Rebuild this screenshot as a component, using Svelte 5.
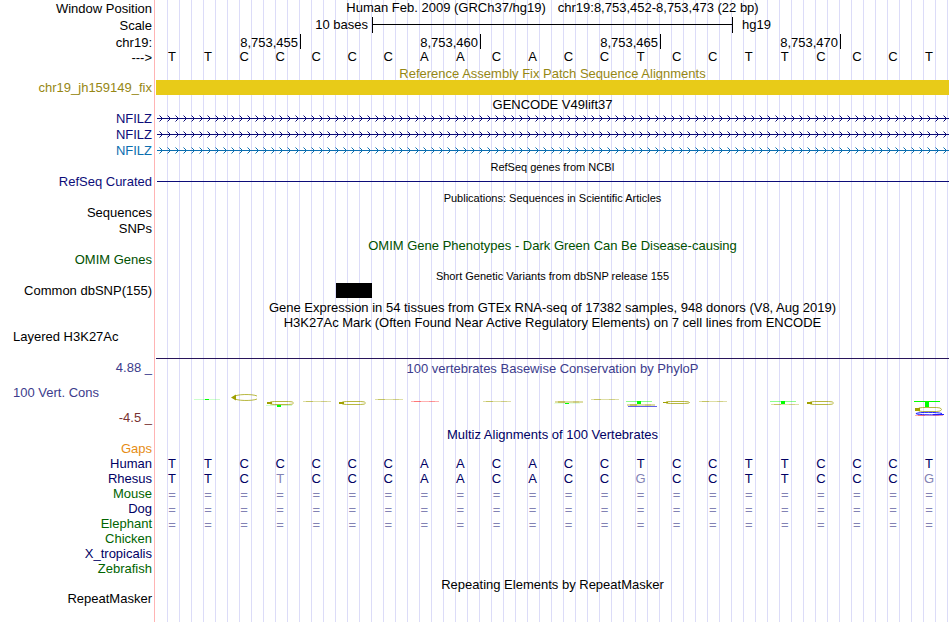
<script lang="ts">
  const sequence = 'TTCCCCCAACACCTCCTTCCCT';
  const ticks = ['8,753,455', '8,753,460', '8,753,465', '8,753,470'];

  const transcripts = [
    { name: 'NFILZ', tone: 'navy' },
    { name: 'NFILZ', tone: 'navy' },
    { name: 'NFILZ', tone: 'azure' },
  ];

  const gapRow = '='.repeat(22);
  const species = [
    { name: 'Gaps', tone: 'orange', bases: '' },
    { name: 'Human', tone: 'midnight', bases: sequence },
    { name: 'Rhesus', tone: 'midnight', bases: 'TTCTCCCAACACCGCCTTCCCG' },
    { name: 'Mouse', tone: 'forest', bases: gapRow },
    { name: 'Dog', tone: 'midnight', bases: gapRow },
    { name: 'Elephant', tone: 'forest', bases: gapRow },
    { name: 'Chicken', tone: 'forest', bases: '' },
    { name: 'X_tropicalis', tone: 'midnight', bases: '' },
    { name: 'Zebrafish', tone: 'forest', bases: '' },
  ];

  // Conservation marks, in plot units: x and y from the top left of the track.
  const rings = [
    { x: 111, y: 26, h: 4 },
    { x: 183, y: 26, h: 4 },
    { x: 507, y: 26, h: 3 },
    { x: 651, y: 26, h: 4 },
    { x: 759, y: 32, h: 5 },
  ];
  const dashes = [
    { x: 147, y: 26, h: 1, tone: 'olive' },
    { x: 219, y: 24, h: 1, tone: 'olive' },
    { x: 255, y: 26, h: 1, tone: 'red' },
    { x: 327, y: 26, h: 1, tone: 'olive' },
    { x: 399, y: 26, h: 2, tone: 'olive' },
    { x: 435, y: 24, h: 1, tone: 'olive' },
    { x: 471, y: 29, h: 2, tone: 'olive' },
    { x: 543, y: 26, h: 1, tone: 'olive' },
    { x: 615, y: 29, h: 1, tone: 'olive' },
    { x: 759, y: 40, h: 1, tone: 'red' },
  ];
  const stems = [
    { x: 38, y: 24, h: 1, bar: 0.2 },
    { x: 110, y: 30, h: 2, bar: 0.2 },
    { x: 398, y: 28, h: 1, bar: 0.1 },
    { x: 470, y: 26, h: 3, bar: 0.45 },
    { x: 614, y: 26, h: 3, bar: 0.45 },
    { x: 758, y: 26, h: 6, bar: 1 },
  ];
</script>

{#snippet title(text: string, tone = 'black', small = false)}
  <div class="row">
    <h2 class="title {tone}" class:small>{text}</h2>
  </div>
{/snippet}

{#snippet bases(letters: string, ref = '')}
  <div class="bases">
    {#each letters as letter, i}
      <span class:diff={ref && letter !== ref[i]}>{letter}</span>
    {/each}
  </div>
{/snippet}

<main class="browser">
  <div class="row header">
    <span class="label">Window Position</span>
    <div class="position">
      <span>Human Feb. 2009 (GRCh37/hg19)</span>
      <span>chr19:8,753,452-8,753,473 (22 bp)</span>
    </div>
  </div>
  <div class="row header">
    <span class="label">Scale</span>
    <div class="scale">
      <span class="scale-size">10 bases</span>
      <span class="scale-bar"></span>
      <span class="scale-db">hg19</span>
    </div>
  </div>
  <div class="row ruler-row">
    <span class="label">chr19:</span>
    <div class="ruler">
      {#each ticks as tick}
        <span>{tick}</span>
      {/each}
    </div>
  </div>
  <div class="row sequence">
    <span class="label">---&gt;</span>
    {@render bases(sequence)}
  </div>

  {@render title('Reference Assembly Fix Patch Sequence Alignments', 'gold')}
  <div class="row">
    <span class="label gold">chr19_jh159149_fix</span>
    <div class="patch"></div>
  </div>

  {@render title('GENCODE V49lift37')}
  {#each transcripts as t, i}
    <div class="row">
      <span class="label {t.tone}">{t.name}</span>
      <svg class="transcript {t.tone}" aria-hidden="true">
        <defs>
          <pattern id="arrow-{i}" width="8" height="16" patternUnits="userSpaceOnUse">
            <path d="M3.5 4.5L6.5 7.5L3.5 10.5" fill="none" stroke="currentColor" />
          </pattern>
        </defs>
        <rect x="1" y="7" width="100%" height="1" fill="currentColor" />
        <rect width="100%" height="16" fill="url(#arrow-{i})" />
      </svg>
    </div>
  {/each}

  {@render title('RefSeq genes from NCBI', 'black', true)}
  <div class="row">
    <span class="label navy">RefSeq Curated</span>
    <div class="refseq"></div>
  </div>

  {@render title('Publications: Sequences in Scientific Articles', 'black', true)}
  <div class="row"><span class="label">Sequences</span></div>
  <div class="row"><span class="label">SNPs</span></div>

  {@render title('OMIM Gene Phenotypes - Dark Green Can Be Disease-causing', 'green')}
  <div class="row"><span class="label green">OMIM Genes</span></div>

  {@render title('Short Genetic Variants from dbSNP release 155', 'black', true)}
  <div class="row">
    <span class="label">Common dbSNP(155)</span>
    <div class="variants"><span></span></div>
  </div>

  {@render title('Gene Expression in 54 tissues from GTEx RNA-seq of 17382 samples, 948 donors (V8, Aug 2019)')}
  {@render title('H3K27Ac Mark (Often Found Near Active Regulatory Elements) on 7 cell lines from ENCODE')}
  <div class="row histone">
    <span class="label left">Layered H3K27Ac</span>
    <div class="baseline"></div>
  </div>

  <div class="row">
    <div class="axis">
      <span class="indigo">4.88 _</span>
      <span class="indigo left">100 Vert. Cons</span>
      <span class="maroon">-4.5 _</span>
    </div>
    <div class="conservation">
      <h2 class="title indigo">100 vertebrates Basewise Conservation by PhyloP</h2>
      <svg viewBox="0 0 793 51" preserveAspectRatio="none" aria-hidden="true">
        <!-- tall open mark, heavier on its left side -->
        <path class="ring" d="M101 21C97 18.9 79 18.7 77 22.5C79 26.3 97 26.1 101 24" />
        <path class="olive" d="M75 22.5L80 19.5V25.5Z" />
        {#each rings as r}
          <rect class="ring" x={r.x + 2.5} y={r.y + 0.5} width="24" height={r.h - 1} rx="5" ry={(r.h - 1) / 2} />
          <rect class="olive" x={r.x} y={r.y + 1} width="5" height={r.h - 2} />
        {/each}
        {#each dashes as d}
          <rect class={d.tone} x={d.x} y={d.y} width="28" height={d.h} opacity="0.35" />
          <rect class={d.tone} x={d.x + 3} y={d.y} width="7" height={d.h} opacity="0.4" />
          <rect class={d.tone} x={d.x + 18} y={d.y} width="6" height={d.h} opacity="0.2" />
        {/each}
        {#each stems as s}
          <rect class="lime" x={s.x} y={s.y} width="26" height="1" opacity={s.bar} />
          <rect class="lime" x={s.x + 11} y={s.y} width="4" height={s.h} />
        {/each}
        <rect class="blue" x="472" y="31" width="29" height="1" opacity="0.7" />
        <path class="blue-line" d="M786 38.5C781 37 763 37 760 38.5C760 40 780 40 788 39.5H777" />
      </svg>
    </div>
  </div>

  {@render title('Multiz Alignments of 100 Vertebrates', 'midnight')}
  {#each species as s}
    <div class="row species">
      <span class="label {s.tone}">{s.name}</span>
      <div class="midnight" class:gapped={s.bases === gapRow}>
        {@render bases(s.bases, s.bases === gapRow ? '' : sequence)}
      </div>
    </div>
  {/each}

  {@render title('Repeating Elements by RepeatMasker')}
  <div class="row"><span class="label">RepeatMasker</span></div>
</main>

<style>
  :global(body) {
    margin: 0;
    background: #fff;
  }

  .browser {
    min-height: 100vh;
    box-sizing: border-box;
    font: 13px/16px "Liberation Sans", Arial, sans-serif;
    color: #000;
    white-space: nowrap;
    /* pink divider beside the labels, then a guideline every 12px */
    background:
      linear-gradient(#ffb4b4, #ffb4b4) 154px 0 / 1px 100% no-repeat,
      repeating-linear-gradient(to right, transparent 0 11px, #dcdcf8 11px 12px) 156px 0 / 100% 100% no-repeat;
  }

  .row {
    display: grid;
    grid-template-columns: 152px minmax(0, 1fr);
    column-gap: 4px;
    padding-right: 1px;
  }

  .label {
    text-align: right;
  }

  .left {
    text-align: left;
    padding-left: 13px;
  }

  .title {
    grid-column: 2;
    height: 15px;
    margin: 0;
    font-size: 13px;
    font-weight: normal;
    line-height: 17px;
    text-align: center;
  }

  .title.small {
    font-size: 11px;
  }

  .header {
    height: 17px;
    line-height: 15px;
  }

  .header .label {
    line-height: 17px;
  }

  .position {
    display: flex;
    justify-content: center;
    gap: 12px;
  }

  .scale {
    display: flex;
    margin-right: 1px;
  }

  .scale-size {
    box-sizing: border-box;
    width: calc(100% * 6 / 22);
    padding-right: 4px;
    text-align: right;
  }

  .scale-bar {
    box-sizing: border-box;
    width: calc(100% * 10 / 22 + 1px);
    height: 16px;
    border: solid #000;
    border-width: 0 1px;
    background: linear-gradient(#000, #000) 0 7px / 100% 1px no-repeat;
  }

  .scale-db {
    padding-left: 9px;
  }

  .ruler-row {
    height: 15px;
    line-height: 18px;
  }

  .ruler {
    display: grid;
    grid-template-columns: 4fr 5fr 5fr 5fr 3fr;
    margin-right: 1px;
  }

  .ruler span {
    height: 15px;
    margin-right: -1px;
    padding-right: 2px;
    border-right: 1px solid #000;
    text-align: right;
  }

  .sequence {
    height: 16px;
  }

  .sequence .label {
    line-height: 18px;
  }

  .bases {
    display: grid;
    grid-template-columns: repeat(22, 1fr);
    text-align: center;
  }

  .bases span {
    padding-right: 4px;
  }

  .patch {
    height: 15px;
    background: #e8cb18;
  }

  .transcript {
    display: block;
    width: 100%;
    height: 16px;
  }

  .refseq {
    height: 1px;
    margin: 7px 0 8px 1px;
    background: #0c0c78;
  }

  .variants {
    margin-right: 1px;
  }

  .variants span {
    display: block;
    height: 15px;
    width: calc(100% / 22);
    margin-left: calc(100% * 5 / 22);
    background: #000;
  }

  .histone {
    height: 30px;
    line-height: 15px;
  }

  .baseline {
    border-bottom: 1px solid #28145a;
  }

  .axis {
    display: flex;
    flex-direction: column;
    gap: 10px;
    padding: 1px 0;
    line-height: 15px;
    text-align: right;
  }

  .axis .left {
    text-align: left;
  }

  .conservation {
    padding-top: 1px;
  }

  .conservation svg {
    display: block;
    width: 100%;
    height: 51px;
  }

  .ring {
    fill: none;
    stroke: #a0a000;
    stroke-opacity: 0.75;
  }

  .olive {
    fill: #a0a000;
  }

  .red {
    fill: #ff2020;
  }

  .lime {
    fill: #00ff00;
  }

  .blue {
    fill: #2020e0;
  }

  .blue-line {
    fill: none;
    stroke: #2020ff;
  }

  .species {
    height: 15px;
    line-height: 15px;
  }

  .black {
    color: #000;
  }

  .gold {
    color: #968714;
  }

  .navy {
    color: #0c0c78;
  }

  .azure {
    color: #0a6eaf;
  }

  .green {
    color: #005000;
  }

  .indigo {
    color: #3c3c8c;
  }

  .maroon {
    color: #783232;
  }

  .orange {
    color: #e68c14;
  }

  .midnight {
    color: #000064;
  }

  .forest {
    color: #006400;
  }

  .diff,
  .midnight.gapped {
    color: #8282b4;
  }

  .gapped {
    line-height: 17px;
  }
</style>
